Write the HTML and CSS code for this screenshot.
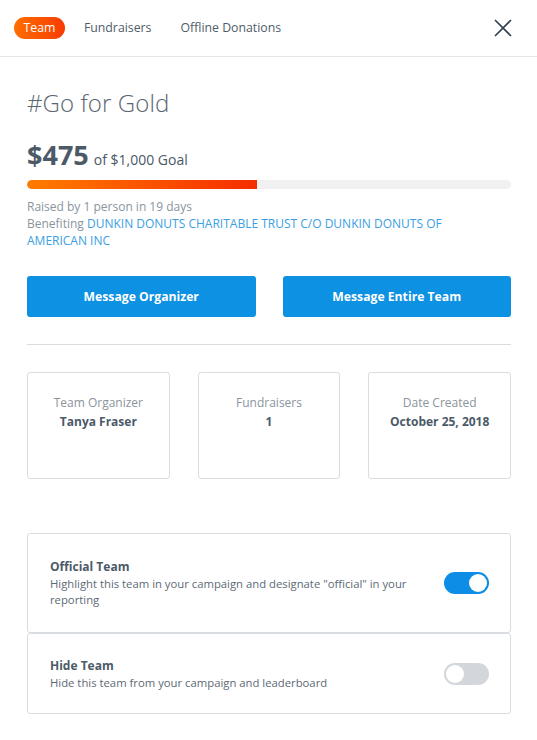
FILE: index.html
```html
<!DOCTYPE html>
<html>
<head>
<meta charset="utf-8">
<link rel="stylesheet" href="styles.css">
</head>
<body>
<div class="panel">
  <header class="topbar">
    <nav class="tabs">
      <span class="tab active">Team</span>
      <span class="tab">Fundraisers</span>
      <span class="tab">Offline Donations</span>
    </nav>
    <svg class="close" width="18" height="18" viewBox="0 0 18 18"><path d="M1 1L17 17M17 1L1 17" stroke="#2d3e4e" stroke-width="1.6" fill="none"/></svg>
  </header>
  <main class="content">
    <h1 class="title">#Go for Gold</h1>
    <div class="amount"><span class="raised">$475</span><span class="goal">of $1,000 Goal</span></div>
    <div class="bar"><div class="fill" style="width:47.5%"></div></div>
    <div class="meta">
      <div class="meta-line">Raised by 1 person in 19 days</div>
      <div class="meta-line">Benefiting <span class="link">DUNKIN DONUTS CHARITABLE TRUST C/O DUNKIN DONUTS OF AMERICAN INC</span></div>
    </div>
    <div class="buttons">
      <button class="btn">Message Organizer</button>
      <button class="btn">Message Entire Team</button>
    </div>
    <hr class="divider">
    <div class="stats">
      <div class="stat"><div class="label">Team Organizer</div><div class="value">Tanya Fraser</div></div>
      <div class="stat"><div class="label">Fundraisers</div><div class="value">1</div></div>
      <div class="stat"><div class="label">Date Created</div><div class="value">October 25, 2018</div></div>
    </div>
    <div class="settings">
      <div class="setting">
        <div class="setting-text">
          <div class="setting-title">Official Team</div>
          <div class="setting-desc">Highlight this team in your campaign and designate "official" in your reporting</div>
        </div>
        <span class="toggle on"><span class="knob"></span></span>
      </div>
      <div class="setting short">
        <div class="setting-text">
          <div class="setting-title">Hide Team</div>
          <div class="setting-desc">Hide this team from your campaign and leaderboard</div>
        </div>
        <span class="toggle"><span class="knob"></span></span>
      </div>
    </div>
  </main>
</div>
</body>
</html>
```
FILE: styles.css
```css
* { box-sizing: border-box; }
html, body { margin: 0; padding: 0; background: #fff; }
body { font-family: "Open Sans", "Noto Sans", sans-serif; color: #4a5866; width: 537px; }
.panel { width: 537px; }
.topbar {
  height: 57px;
  border-bottom: 1px solid #e3e6e9;
  display: flex;
  align-items: center;
  justify-content: space-between;
  padding: 0 25px 1px 14px;
}
.tabs { display: flex; align-items: center; gap: 9px; }
.tab { font-size: 12.3px; color: #4f5d6b; padding: 3px 10px; line-height: 16px; }
.tab.active { padding: 3px 9.5px; color: #fff; border-radius: 12px; background: linear-gradient(90deg, #ff6e00, #f73c00); }
.close { display: block; margin-top: 1px; }
.content { padding: 30px 26px 0 27px; }
.title { font-weight: 300; font-size: 24px; margin: 0; line-height: 32px; color: #5a6672; letter-spacing: 0.1px; }
.amount { margin-top: 22px; height: 28px; display: flex; align-items: baseline; gap: 5px; color: #4a5866; }
.raised { font-size: 27px; line-height: 28px; font-weight: 700; color: #4c5a68; }
.goal { font-size: 14px; line-height: 20px; }
.bar { margin-top: 11px; height: 9px; border-radius: 5px; background: #f1f1f1; overflow: hidden; }
.fill { height: 100%; border-radius: 5px 0 0 5px; background: linear-gradient(90deg, #ff7b00, #f52e00); }
.meta { margin-top: 9px; font-size: 12px; line-height: 17px; color: #8a949d; max-width: 455px; }
.meta-line { line-height: 17px; }
.link { color: #3aa0e3; }
.buttons { display: flex; gap: 27px; margin-top: 27px; }
.btn {
  flex: 1; height: 41px; border: 0; border-radius: 3px; background: #0d91e3; color: #fff;
  font-family: "Open Sans", sans-serif; font-weight: 700; font-size: 12.2px;
}
.divider { border: 0; border-top: 1px solid #d8dce0; margin: 27px 0 0; }
.stats { display: flex; gap: 28px; margin-top: 27px; }
.stat {
  flex: 1; height: 107px; border: 1px solid #d9dde1; border-radius: 3px;
  text-align: center; padding-top: 21px;
}
.label { font-size: 12px; color: #8a949d; line-height: 18px; }
.value { font-size: 12px; font-weight: 700; color: #4c5a68; line-height: 20px; margin-top: 0; }
.settings { margin-top: 54px; }
.setting {
  border: 1px solid #d9dde1; border-radius: 3px; display: flex; align-items: center;
  padding: 24px 21px 24px 22px; min-height: 100px;
}
.setting.short { min-height: 81px; padding-top: 22px; padding-bottom: 22px; }
.setting-text { flex: 1; padding-right: 20px; }
.setting-title { font-size: 12px; font-weight: 700; color: #4c5a68; line-height: 18px; }
.setting-desc { font-size: 11.3px; color: #5d6975; line-height: 16px; }
.toggle {
  width: 45px; height: 22px; border-radius: 11px; background: #d3d7db; position: relative; flex: none;
}
.toggle.on { background: #0d8de6; }
.knob {
  position: absolute; top: 2px; left: 2px; width: 18px; height: 18px; border-radius: 50%; background: #fff;
}
.toggle.on .knob { left: 25px; }
```
